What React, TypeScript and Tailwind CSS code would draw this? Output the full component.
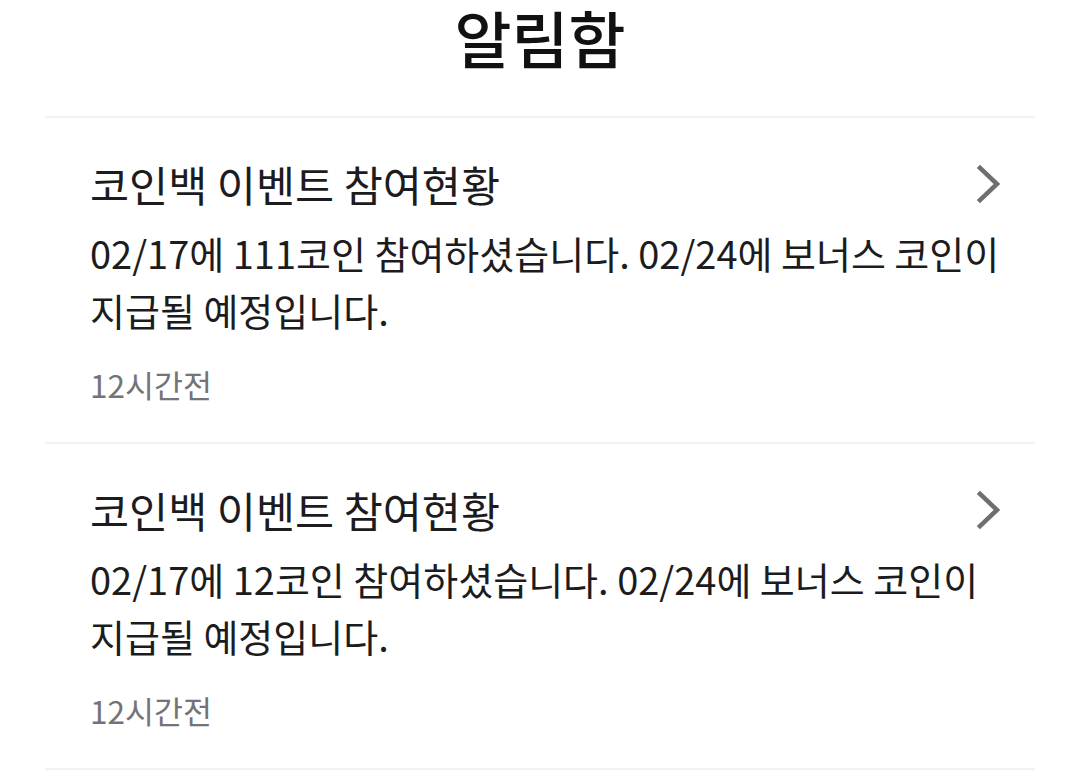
const notices = [
  {
    title: '코인백 이벤트 참여현황',
    body: '02/17에 111코인 참여하셨습니다. 02/24에 보너스 코인이 지급될 예정입니다.',
    time: '12시간전',
  },
  {
    title: '코인백 이벤트 참여현황',
    body: '02/17에 12코인 참여하셨습니다. 02/24에 보너스 코인이 지급될 예정입니다.',
    time: '12시간전',
  },
]

function Chevron() {
  return (
    <svg width="28" height="40" viewBox="0 0 28 40" fill="none" aria-hidden="true">
      <polyline
        points="5,4 22,20 5,36"
        stroke="#6e6e73"
        strokeWidth="4.5"
        strokeLinecap="square"
        strokeLinejoin="miter"
      />
    </svg>
  )
}

// 알림함 목록
export default function App() {
  return (
    <div className="min-h-screen bg-white px-[45px] font-['Noto_Sans_CJK_KR',sans-serif] text-[#1c1c1e]">
      <h1 className="h-[116px] pt-[2px] text-center text-[62px] font-medium leading-[70px] text-[#111]">
        알림함
      </h1>
      <ul>
        {notices.map((n, i) => (
          <li key={i} className="border-t-2 border-[#f2f2f2] pl-[45px] pr-[32px] pt-[38px] pb-[38px]">
            <div className="flex items-center justify-between">
              <p className="text-[42.5px] leading-[56px]">{n.title}</p>
              <Chevron />
            </div>
            <p className="mt-[12px] pr-[3px] break-keep text-[38px] leading-[57px]">{n.body}</p>
            <p className="mt-[26px] text-[31.5px] leading-[40px] text-[#737378]">{n.time}</p>
          </li>
        ))}
        <li className="border-t-2 border-[#f2f2f2]" />
      </ul>
    </div>
  )
}
